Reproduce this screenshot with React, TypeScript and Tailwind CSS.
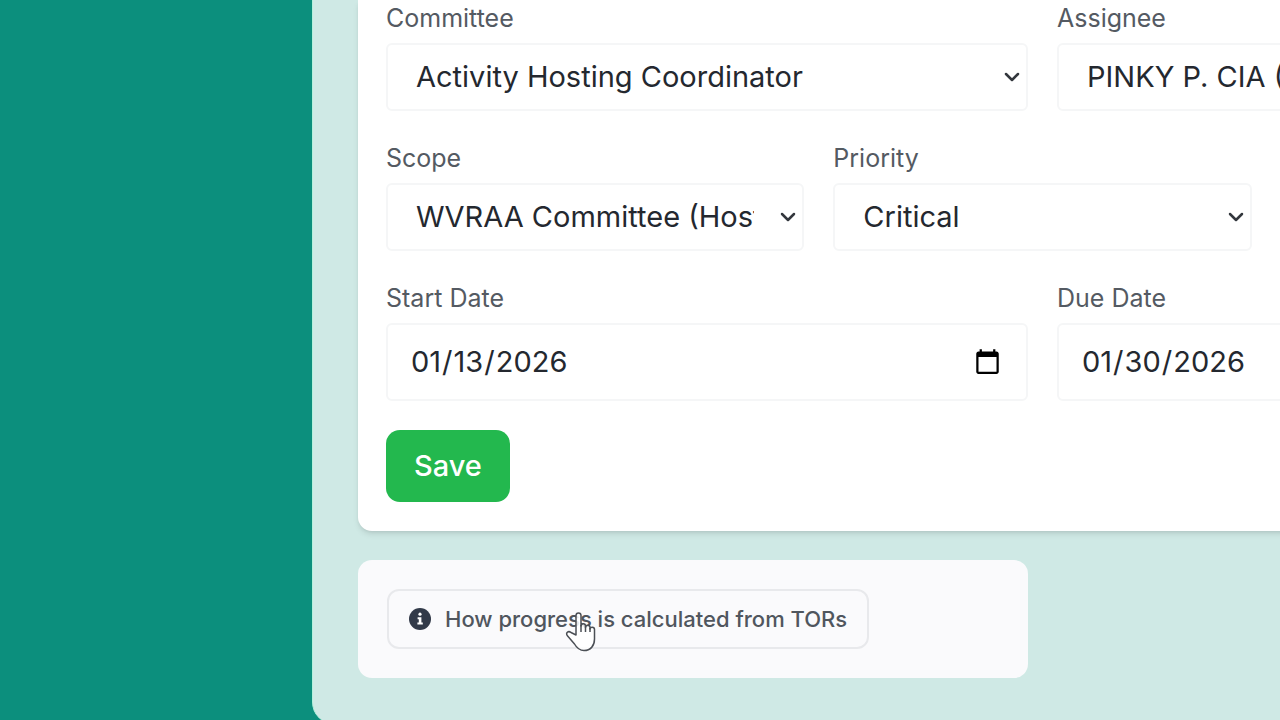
import type { ReactNode } from "react";
import { ChevronDown } from "lucide-react";

const controlClass =
  "w-full rounded-md border-2 border-[#f5f6f7] bg-white text-[29px] text-[#24282f] outline-none";

function Field({ id, label, span, children }: { id: string; label: string; span: string; children: ReactNode }) {
  return (
    <div className={span}>
      <label htmlFor={id} className="mb-[7px] block text-[25px] leading-[36px] text-[#545a62]">
        {label}
      </label>
      {children}
    </div>
  );
}

function SelectBox({ id, value }: { id: string; value: string }) {
  return (
    <div className="relative">
      <select
        id={id}
        defaultValue={value}
        className={`${controlClass} h-[68px] appearance-none pr-12 pl-7`}
      >
        <option>{value}</option>
      </select>
      <ChevronDown
        className="pointer-events-none absolute top-[22px] right-1 size-6 text-[#33373d]"
        strokeWidth={2.5}
      />
    </div>
  );
}

function DateBox({ id, value }: { id: string; value: string }) {
  return (
    <input id={id} type="date" defaultValue={value} className={`${controlClass} block h-[78px] px-[22px]`} />
  );
}

function InfoIcon() {
  return (
    <svg viewBox="0 0 22 22" className="size-[22px] shrink-0" aria-hidden="true">
      <circle cx="11" cy="11" r="11" fill="#323a49" />
      <circle cx="11" cy="6.2" r="1.6" fill="#fff" />
      <path d="M8.6 9.2h3.8v5.4h1.4v2H8.4v-2h1.4v-3.4H8.6z" fill="#fff" />
    </svg>
  );
}

function HandCursor() {
  return (
    <svg
      viewBox="0 0 32 42"
      className="pointer-events-none absolute top-[22px] left-[178px] h-[42px] w-8"
      aria-hidden="true"
    >
      <path
        d="M11 24V4.5C11 1 16 1 16 4.5V15c0-3 4.5-3 4.5 0v1.5c0-3 4.5-3 4.5 0V18c0-2.5 4.5-2.5 4.5.5V28c0 7-4 11.5-10.5 11.5-5 0-7.5-3-9.5-6.5L2.2 24.5C.5 21.5 3.5 19.5 6 21.5z"
        fill="#fff"
        fillOpacity="0.85"
        stroke="#4b4f55"
        strokeWidth="1.5"
        strokeLinejoin="round"
      />
      <path d="M16 14v7M20.5 15.5V21M25 17v4" fill="none" stroke="#4b4f55" strokeWidth="1.5" />
    </svg>
  );
}

export default function App() {
  return (
    <div className="flex h-screen overflow-hidden bg-[#0c8f7d] font-['Inter',sans-serif]">
      <aside className="w-[312px] shrink-0" />

      <main className="min-w-[1460px] flex-1 self-start rounded-bl-[22px] border-l border-[#b4f0dc] bg-[#cfe9e5] px-[45px] pb-[46px]">
        {/* Task form */}
        <form
          className="rounded-b-[14px] bg-white px-7 pb-[29px] shadow-md"
          onSubmit={(e) => e.preventDefault()}
        >
          <div className="grid grid-cols-6 gap-[29px]">
            <Field id="committee" label="Committee" span="col-span-3">
              <SelectBox id="committee" value="Activity Hosting Coordinator" />
            </Field>
            <Field id="assignee" label="Assignee" span="col-span-3">
              <SelectBox id="assignee" value="PINKY P. CIA (Member)" />
            </Field>
            <Field id="scope" label="Scope" span="col-span-2">
              <SelectBox id="scope" value="WVRAA Committee (Host)" />
            </Field>
            <Field id="priority" label="Priority" span="col-span-2">
              <SelectBox id="priority" value="Critical" />
            </Field>
            <Field id="start" label="Start Date" span="col-span-3 col-start-1">
              <DateBox id="start" value="2026-01-13" />
            </Field>
            <Field id="due" label="Due Date" span="col-span-3">
              <DateBox id="due" value="2026-01-30" />
            </Field>
          </div>

          <button
            type="submit"
            className="mt-[29px] h-[72px] rounded-[14px] bg-[#23b84e] px-7 text-[29px] font-medium text-white"
          >
            Save
          </button>
        </form>

        {/* Progress help */}
        <div className="mt-[29px] grid grid-cols-2 gap-[29px]">
          <section className="rounded-[14px] bg-[#fafafc] p-[29px]">
            <div className="relative w-fit">
              <button
                type="button"
                className="flex h-[60px] items-center gap-[14px] rounded-xl border-2 border-[#e8e9ec] px-5 text-[22px] font-medium text-[#50565e]"
              >
                <InfoIcon />
                How progress is calculated from TORs
              </button>
              <HandCursor />
            </div>
          </section>
        </div>
      </main>
    </div>
  );
}
